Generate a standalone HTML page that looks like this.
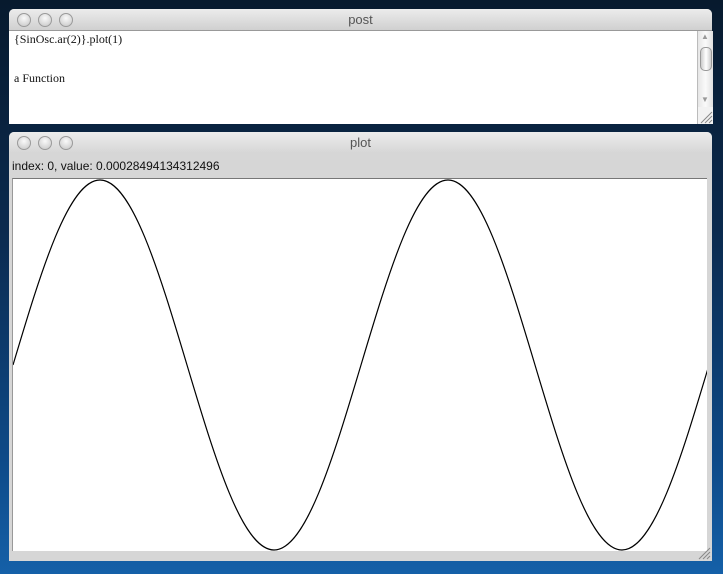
<!DOCTYPE html>
<html><head><style>
html,body{margin:0;padding:0;width:723px;height:574px;overflow:hidden;background:linear-gradient(180deg,#071a2e 0%,#0b2a4e 40%,#0e4a88 80%,#1560a8 100%);font-family:"Liberation Sans",sans-serif;}
.win{position:absolute;left:9px;width:703px;background:#d6d6d6;border-radius:5px 5px 0 0;}
.tb{height:21px;background:linear-gradient(#ececec,#d0d0d0);border-radius:5px 5px 0 0;border-bottom:1px solid #999;position:relative;text-align:center;font-size:13px;color:#555;line-height:21px;}
.btn{position:absolute;top:4px;width:12px;height:12px;border-radius:50%;background:radial-gradient(circle at 50% 35%,#fafafa,#c4c4c4);border:1px solid #9a9a9a;}
</style></head><body>
<div class="win" style="top:9px;height:115px;">
 <div class="tb"><span class="btn" style="left:8px"></span><span class="btn" style="left:29px"></span><span class="btn" style="left:50px"></span>post</div>
 <div style="position:absolute;left:0;top:22px;width:688px;height:93px;background:#fff;font-family:'Liberation Serif',serif;font-size:12px;color:#111;">
  <div style="position:absolute;left:5px;top:1px;">{SinOsc.ar(2)}.plot(1)</div>
  <div style="position:absolute;left:5px;top:40px;">a Function</div>
 </div>
 <div style="position:absolute;left:688px;top:22px;width:15px;height:76px;background:linear-gradient(90deg,#e6e6e6,#fafafa,#e0e0e0);border-left:1px solid #bbb;">
  <div style="position:absolute;left:3px;top:1px;font-size:8px;color:#999;">▲</div>
  <div style="position:absolute;left:2px;top:16px;width:10px;height:22px;border:1px solid #999;border-radius:5px;background:linear-gradient(90deg,#ccc,#fff,#ccc);"></div>
  <div style="position:absolute;left:3px;top:64px;font-size:8px;color:#999;">▼</div>
 </div>
 <div style="position:absolute;left:688px;top:98px;width:15px;height:17px;background:#f2f2f2;border-left:1px solid #bbb;">
  <svg width="15" height="17" style="position:absolute;left:0;top:0"><path d="M3 16 L14 5 M7 16 L14 9 M11 16 L14 13" stroke="#888" stroke-width="1"/></svg>
 </div>
</div>
<div class="win" style="top:132px;height:429px;">
 <div class="tb" style="border-bottom:none;background:linear-gradient(#ececec,#d6d6d6);"><span class="btn" style="left:8px"></span><span class="btn" style="left:29px"></span><span class="btn" style="left:50px"></span>plot</div>
 <div style="position:absolute;left:3px;top:27px;font-size:12px;color:#111;">index: 0, value: 0.00028494134312496</div>
 <div style="position:absolute;left:3px;top:46px;width:694px;height:372px;background:#fff;border-top:1px solid #777;border-left:1px solid #999;overflow:hidden;">
  <svg width="694" height="372" viewBox="13 179 694 372" style="position:absolute;left:0;top:0">
   <path fill="none" stroke="#000" stroke-width="1.2" d="M13 365 c28.38,-94.8 55.52,-185 87,-185 c31.48,0 58.62,90.2 87,185 c28.38,94.8 55.52,185 87,185 c31.48,0 58.62,-90.2 87,-185 c28.38,-94.8 55.52,-185 87,-185 c31.48,0 58.62,90.2 87,185 c28.38,94.8 55.52,185 87,185 c31.48,0 58.62,-90.2 87,-185"/>
  </svg>
 </div>
 <svg width="14" height="14" style="position:absolute;left:688px;top:414px"><path d="M2 13 L13 2 M6 13 L13 6 M10 13 L13 10" stroke="#888" stroke-width="1"/></svg>
</div>
</body></html>
